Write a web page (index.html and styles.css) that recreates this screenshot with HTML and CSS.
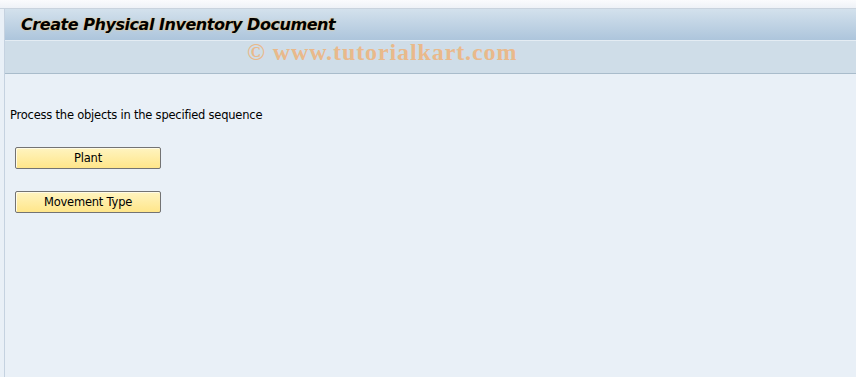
FILE: index.html
```html
<!DOCTYPE html>
<html>
<head>
<meta charset="utf-8">
<link rel="stylesheet" href="styles.css">
</head>
<body>
<div class="topstrip"></div>
<div class="frame">
  <div class="titlebar"><h1 class="title">Create Physical Inventory Document</h1></div>
  <div class="toolbar"><span class="watermark">© www.tutorialkart.com</span></div>
  <div class="content">
    <p class="intro">Process the objects in the specified sequence</p>
    <div class="buttons">
      <button class="btn">Plant</button>
      <button class="btn">Movement Type</button>
    </div>
  </div>
</div>
</body>
</html>
```
FILE: styles.css
```css
html, body {
  margin: 0;
  padding: 0;
  height: 100%;
}
body {
  background: #e9f0f7;
  font-family: "DejaVu Sans", Verdana, sans-serif;
  display: flex;
  flex-direction: column;
  overflow: hidden;
}
.topstrip {
  height: 8px;
  background: linear-gradient(#fafbfd, #eef2f7);
  border-bottom: 1px solid #c9d3de;
  flex: none;
}
.frame {
  flex: 1;
  margin-left: 4px;
  border-left: 1px solid #c5d2e0;
  display: flex;
  flex-direction: column;
}
.titlebar {
  height: 31px;
  background: linear-gradient(#d3e1ec, #adc5dc);
  border-bottom: 1px solid #e4ecf3;
  display: flex;
  align-items: center;
  padding-left: 16px;
}
.title {
  margin: 0;
  font-family: "DejaVu Sans", Verdana, sans-serif;
  font-size: 16px;
  font-weight: bold;
  font-style: italic;
  color: #000;
  text-shadow: 0 0 2px #e9c27a, 0 0 1px #f5d9a0;
  letter-spacing: -0.45px;
}
.toolbar {
  height: 32px;
  background: #cfdde8;
  border-bottom: 1px solid #a9bccb;
  display: flex;
  align-items: flex-start;
  padding-left: 242px;
}
.watermark {
  font-family: "Liberation Serif", "Times New Roman", serif;
  font-weight: bold;
  font-size: 24px;
  line-height: 24px;
  margin-top: -1px;
  color: #e9b98b;
  letter-spacing: 0.9px;
}
.content {
  padding: 34px 0 0 5px;
}
.intro {
  margin: 0;
  font-size: 11.5px;
  color: #000;
  letter-spacing: -0.22px;
}
.buttons {
  display: flex;
  flex-direction: column;
  align-items: flex-start;
  gap: 22px;
  margin-top: 25px;
  padding-left: 5px;
}
.btn {
  width: 146px;
  height: 22px;
  padding: 0;
  background: linear-gradient(#fff4c0, #ffe68a);
  border: 1px solid #737373;
  border-radius: 2px;
  font-family: "DejaVu Sans", Verdana, sans-serif;
  font-size: 11.5px;
  letter-spacing: -0.22px;
  color: #000;
  box-shadow: inset 1px 1px 0 #fffbe6;
}
```
